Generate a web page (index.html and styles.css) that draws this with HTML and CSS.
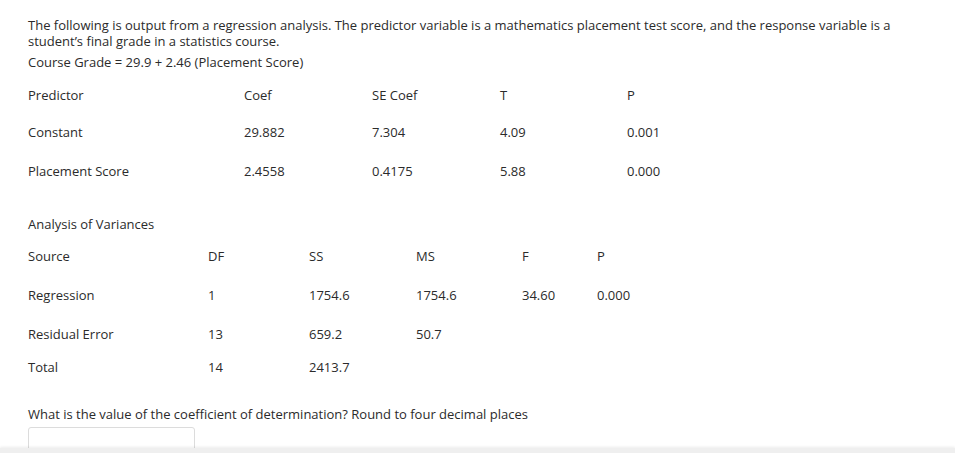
FILE: index.html
```html
<!DOCTYPE html>
<html>
<head>
<meta charset="utf-8">
<link rel="stylesheet" href="styles.css">
</head>
<body>
<div class="page">
  <p class="intro">The following is output from a regression analysis. The predictor variable is a mathematics placement test score, and the response variable is a student’s final grade in a statistics course.</p>
  <p class="equation">Course Grade = 29.9 + 2.46 (Placement Score)</p>

  <div class="coef-table">
    <span>Predictor</span><span>Coef</span><span>SE Coef</span><span>T</span><span>P</span>
    <span>Constant</span><span>29.882</span><span>7.304</span><span>4.09</span><span>0.001</span>
    <span>Placement Score</span><span>2.4558</span><span>0.4175</span><span>5.88</span><span>0.000</span>
  </div>

  <p class="section-title">Analysis of Variances</p>

  <div class="anova-table">
    <span>Source</span><span>DF</span><span>SS</span><span>MS</span><span>F</span><span>P</span>
    <span>Regression</span><span>1</span><span>1754.6</span><span>1754.6</span><span>34.60</span><span>0.000</span>
    <span>Residual Error</span><span>13</span><span>659.2</span><span>50.7</span><span></span><span></span>
    <span>Total</span><span>14</span><span>2413.7</span><span></span><span></span><span></span>
  </div>

  <p class="question">What is the value of the coefficient of determination? Round to four decimal places</p>
  <div class="answer-box"></div>
</div>
<div class="bottom-bar"></div>
</body>
</html>
```

FILE: styles.css
```css
html, body {
  margin: 0;
  padding: 0;
  background: #fff;
  overflow: hidden;
}

body {
  font-family: "Open Sans", "Liberation Sans", sans-serif;
  font-size: 13px;
  line-height: 16px;
  color: #2b2b2b;
}

.page {
  padding: 17px 0 0 28px;
  height: 453px;
  box-sizing: border-box;
}

p {
  margin: 0;
}

.intro {
  width: 880px;
}

.equation {
  margin-top: 5px;
}

.coef-table {
  margin-top: 17px;
  display: grid;
  grid-template-columns: 216px 128px 128px 127px 128px;
  grid-template-rows: 37px 39px 16px;
}

.section-title {
  margin-top: 37px;
}

.anova-table {
  margin-top: 16px;
  display: grid;
  grid-template-columns: 180px 101px 107px 106px 75px 80px;
  grid-template-rows: 39px 39px 33px 16px;
}

.question {
  margin-top: 31px;
}

.answer-box {
  margin-top: 5px;
  width: 167px;
  height: 40px;
  border: 1px solid #dcdcdc;
  border-radius: 3px;
  box-sizing: border-box;
}

.bottom-bar {
  position: fixed;
  left: 0;
  right: 0;
  bottom: 0;
  height: 5px;
  background: #efefef;
  box-shadow: 0 -1px 3px rgba(0, 0, 0, 0.08);
}
```
